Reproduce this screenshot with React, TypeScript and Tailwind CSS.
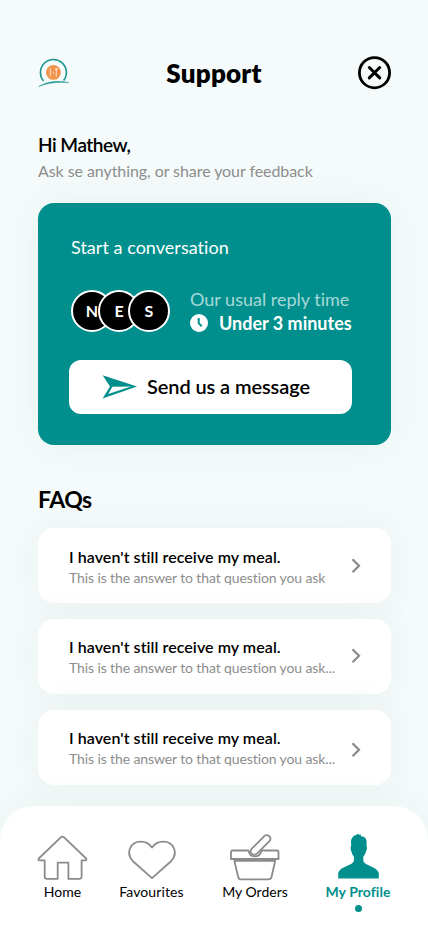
import React from "react";

const faqs = [
  { title: "I haven't still receive my meal.", answer: "This is the answer to that question you ask", chevron: "mt-[30px]", text: "pt-[19px]" },
  { title: "I haven't still receive my meal.", answer: "This is the answer to that question you ask...", chevron: "mt-[29px]", text: "pt-[18px]" },
  { title: "I haven't still receive my meal.", answer: "This is the answer to that question you ask...", chevron: "mt-[32px]", text: "pt-[18px]" },
];

function Logo() {
  return (
    <svg className="h-[34px] w-[32px]" viewBox="0 0 32 34" fill="none">
      <path d="M5.6 25A13 13 0 1 1 25.6 24.6" stroke="#1b9490" strokeWidth="1.6" />
      <circle cx="15.4" cy="16.4" r="7.4" fill="#f0944d" />
      <path d="M12.3 12v3.2M12.3 15v5.6M18.3 14v6.6M13.8 15.5l2.7 2.5" stroke="#fde3cf" strokeWidth="0.9" />
      <circle cx="18.3" cy="13.3" r="1.2" fill="#fde3cf" />
      <path d="M0.8 30.6C8 25.6 20 24.2 30.6 26.6C20 25.8 9 26.8 0.8 30.6Z" fill="#14908c" stroke="#14908c" strokeWidth="0.5" />
    </svg>
  );
}

function Avatar({ letter, className = "" }: { letter: string; className?: string }) {
  return (
    <div className={`flex size-[42px] shrink-0 items-center justify-center rounded-full border-2 border-white bg-black text-[16px] leading-none font-bold text-white ${className}`}>
      {letter}
    </div>
  );
}

export default function App() {
  return (
    <div className="flex h-[926px] w-[428px] flex-col overflow-hidden bg-[#f5fbfb] font-['Lato',sans-serif] text-black [font-variant-ligatures:none]">
      <header className="mt-[56px] flex h-[34px] items-center justify-between pr-[36px] pl-[38px]">
        <Logo />
        <h1 className="text-[26px] leading-[34px] font-extrabold tracking-[0.2px]">Support</h1>
        <svg className="size-[34px]" viewBox="0 0 34 34" fill="none" stroke="black" strokeWidth="2.8" strokeLinecap="round">
          <circle cx="16.5" cy="16.7" r="15.1" />
          <path d="M11.3 11.5l10.4 10.4M21.7 11.5l-10.4 10.4" strokeWidth="3" />
        </svg>
      </header>

      <main className="px-[38px] pt-[43px]">
        <p className="text-[19px] leading-[24px] font-semibold tracking-[-0.5px]">Hi Mathew,</p>
        <p className="mt-[4px] text-[16px] leading-[20px] tracking-[-0.07px] text-[#8d8d8d]">Ask se anything, or share your feedback</p>

        <section className="mt-[22px] mr-[-1px] flex h-[242px] flex-col rounded-[16px] bg-[#008f8c] px-[31px] shadow-[0_0_40px_rgba(0,60,60,0.06)]">
          <h2 className="mt-[33px] ml-[2px] text-[18px] leading-[22px] tracking-[0.03px] text-white">Start a conversation</h2>
          <div className="mt-[29px] ml-[2px] flex">
            <div className="mt-[3px] flex">
              <Avatar letter="N" />
              <Avatar letter="E" className="-ml-[15px]" />
              <Avatar letter="S" className="-ml-[12px]" />
            </div>
            <div className="ml-[20px]">
              <p className="text-[18px] leading-[24px] text-[#a6d9d8]">Our usual reply time</p>
              <div className="flex h-[24px] items-center">
                <svg className="size-[18px]" viewBox="0 0 18 18">
                  <circle cx="9" cy="9" r="9" fill="white" />
                  <path d="M8.7 4v5.2l3 3.2" fill="none" stroke="#008f8c" strokeWidth="2" />
                </svg>
                <span className="ml-[11px] text-[18px] leading-[24px] font-bold whitespace-nowrap text-white">Under 3 minutes</span>
              </div>
            </div>
          </div>
          <button className="mt-[25px] flex h-[54px] w-[283px] items-center rounded-[12px] bg-white pl-[33px]">
            <svg className="h-[24px] w-[36px]" viewBox="0 0 36 24">
              <path fillRule="evenodd" d="M0.6 0.2L35 11.4L0.6 23.4L8 11.4ZM10.4 11.7L6.2 19L29 11.4Z" fill="#008f8c" />
            </svg>
            <span className="-mt-[2px] ml-[9px] text-[20px] leading-[26px] font-semibold tracking-[-0.1px]">Send us a message</span>
          </button>
        </section>

        <h2 className="mt-[39px] text-[23px] leading-[30px] font-bold tracking-[-0.5px]">FAQs</h2>
        <div className="mt-[14px] mr-[-1px] flex flex-col gap-[16px]">
          {faqs.map((faq, i) => (
            <article key={i} className="flex h-[75px] shrink-0 justify-between rounded-[16px] bg-white pr-[30px] pl-[31px] shadow-[0_0_40px_rgba(0,60,60,0.05)]">
              <div className={`whitespace-nowrap ${faq.text}`}>
                <h3 className="text-[16px] leading-[20px] font-semibold tracking-[0.06px]">{faq.title}</h3>
                <p className="mt-[1px] text-[14px] leading-[20px] tracking-[-0.11px] text-[#8d8d8d]">{faq.answer}</p>
              </div>
              <svg className={`h-[16px] w-[10px] ${faq.chevron}`} viewBox="0 0 10 16" fill="none" stroke="#8a8a8a" strokeWidth="2.2">
                <path d="M1.5 1.2l6.5 6.5L1.5 14.2" />
              </svg>
            </article>
          ))}
        </div>
      </main>

      <nav className="mt-[21px] flex h-[120px] shrink-0 rounded-t-[34px] bg-white pt-[26px] pl-[37px] text-[14px] leading-[18px] shadow-[0_0_40px_rgba(0,60,60,0.05)]">
        <a className="flex w-[51px] flex-col items-center">
          <svg className="h-[51px] w-[51px]" viewBox="0 0 51 51" fill="none" stroke="#8b8b8b" strokeWidth="1.8" strokeLinejoin="round">
            <path d="M24 5.2Q25.4 4.1 26.8 5.2L49.2 26.5Q50 28.5 48 28.3H44.6V44.5Q44.6 46.9 42 46.9H31.4V30.6H20.7V46.9H10.2Q7.7 46.9 7.7 44.5V28.3H2.8Q0.8 28.5 1.8 26.5Z" />
          </svg>
          <span>Home</span>
        </a>
        <a className="ml-[30px] flex w-[67px] flex-col items-center">
          <svg className="h-[51px] w-[51px]" viewBox="0 0 51 51" fill="none" stroke="#8b8b8b" strokeWidth="1.8" strokeLinejoin="round">
            <path d="M26 46.2L6.7 29C-0.8 20.5 4.8 9.6 14.7 9.6C19.9 9.6 23.5 11.7 26 15.6C28.5 11.7 32.1 9.6 37.3 9.6C47.2 9.6 52.8 20.5 45.3 29Z" />
          </svg>
          <span className="tracking-[0.12px]">Favourites</span>
        </a>
        <a className="ml-[36px] flex w-[68px] flex-col items-center whitespace-nowrap">
          <svg className="h-[51px] w-[51px]" viewBox="1 0 51 51" fill="none" stroke="#8b8b8b" strokeWidth="1.8" strokeLinejoin="round">
            <path d="M19.5 18.5H3.5Q2 18.5 2 20V27H49.5V20Q49.5 18.5 48 18.5H32.5C30.8 26.3 20.5 26.6 19.5 18.5Z" />
            <path d="M5.3 28.8H46.2L42.5 45Q42 47.3 39.5 47.3H12Q9.7 47.3 9.2 45Z" />
            <path d="M22.3 17.2L35.5 3.8Q38 2.2 40.3 4.2Q42.4 6.4 40.7 8.9L28 21.6Q25.3 23.8 22.8 21.9Q20.6 19.8 22.3 17.2Z" />
          </svg>
          <span>My Orders</span>
        </a>
        <a className="ml-[35px] flex w-[68px] flex-col items-center font-bold whitespace-nowrap text-[#008f8c]">
          <svg className="h-[51px] w-[51px]" viewBox="0 0 51 51" fill="#008f8c">
            <path d="M18.3 13.2C16.9 6.5 20 3.4 26 1.8C25.5 2.8 26.3 3.2 27.8 2.2V4C33 4.7 34.4 8 33.4 13.2Q34.8 15.5 33 19.5Q32.4 22.5 30.3 24.8V29C31.5 33.8 43.5 34 45.8 41V46.4H5.2V41C7.2 34 19.5 33.8 20.9 29V24.8Q18.9 22.5 18.4 19.5Q16.8 15.5 18.3 13.2Z" />
          </svg>
          <span className="tracking-[0.06px]">My Profile</span>
          <i className="mt-[4px] size-[7px] shrink-0 rounded-full bg-[#008f8c]" />
        </a>
      </nav>
    </div>
  );
}
